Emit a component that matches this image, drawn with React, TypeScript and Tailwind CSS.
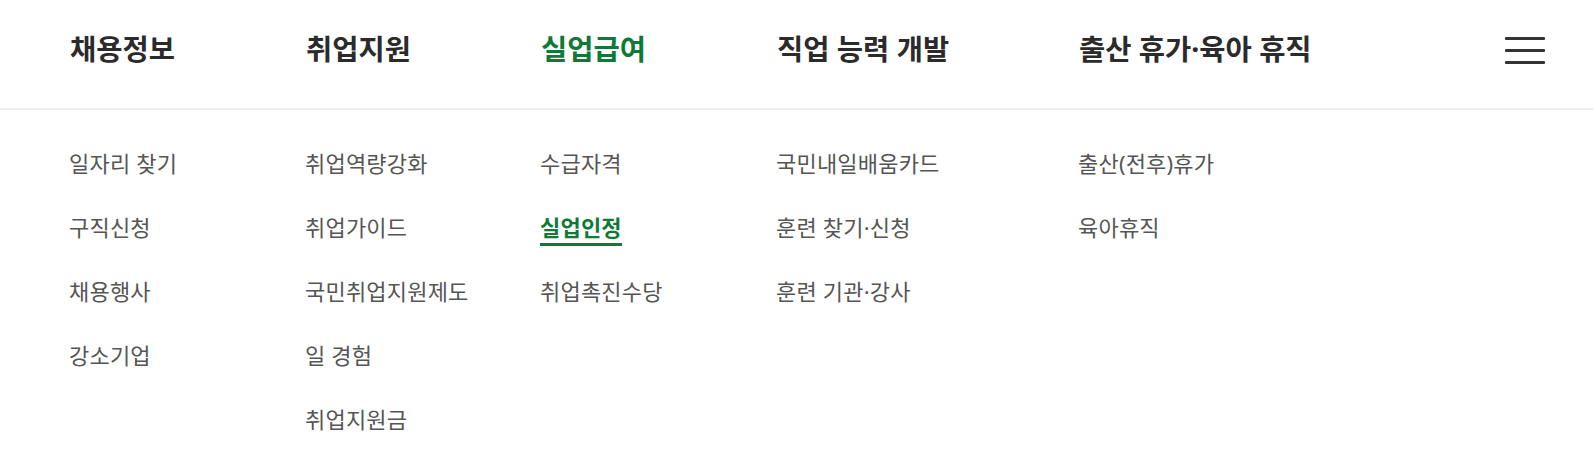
import React from "react";

type Col = { title: string; width: string; active?: boolean; items: { label: string; active?: boolean }[] };

const cols: Col[] = [
  { title: "채용정보", width: "w-[236px]", items: [{ label: "일자리 찾기" }, { label: "구직신청" }, { label: "채용행사" }, { label: "강소기업" }] },
  { title: "취업지원", width: "w-[235px]", items: [{ label: "취업역량강화" }, { label: "취업가이드" }, { label: "국민취업지원제도" }, { label: "일 경험" }, { label: "취업지원금" }] },
  { title: "실업급여", width: "w-[236px]", active: true, items: [{ label: "수급자격" }, { label: "실업인정", active: true }, { label: "취업촉진수당" }] },
  { title: "직업 능력 개발", width: "w-[302px]", items: [{ label: "국민내일배움카드" }, { label: "훈련 찾기·신청" }, { label: "훈련 기관·강사" }] },
  { title: "출산 휴가·육아 휴직", width: "w-[300px]", items: [{ label: "출산(전후)휴가" }, { label: "육아휴직" }] },
];

export default function App() {
  return (
    <div
      className="w-[1593px] h-[469px] bg-white overflow-hidden"
      style={{ fontFamily: '"Noto Sans", "Noto Sans CJK KR", sans-serif' }}
    >
      <div className="h-[110px] border-b-2 border-[#eeeeee] flex items-center pb-[11px] pl-[70px] pr-[48px]">
        <nav className="flex flex-1">
          {cols.map((c) => (
            <div
              key={c.title}
              className={`${c.width} shrink-0 text-[28.5px] font-bold tracking-[0px] leading-[34px] whitespace-nowrap ${
                c.active ? "text-[#0f7a37]" : "text-[#2b2b2b]"
              }`}
            >
              {c.title}
            </div>
          ))}
        </nav>
        <button className="w-[40px] h-[27px] mt-[3px] flex flex-col justify-between" aria-label="menu">
          <span className="block h-[3px] w-full bg-[#333333] rounded-[1px]" />
          <span className="block h-[3px] w-full bg-[#333333] rounded-[1px]" />
          <span className="block h-[3px] w-full bg-[#333333] rounded-[1px]" />
        </button>
      </div>
      <div className="flex pl-[69px] pt-[21px]">
        {cols.map((c) => (
          <ul key={c.title} className={`${c.width} shrink-0`}>
            {c.items.map((it) => (
              <li key={it.label} className="h-[64px] flex items-center">
                <span
                  className={`relative whitespace-nowrap text-[22px] leading-[28px] tracking-[0.2px] ${
                    it.active ? "text-[#0f7a37] font-bold" : "text-[#555555]"
                  }`}
                >
                  {it.label}
                  {it.active && <span className="absolute left-0 right-0 -bottom-[5px] h-[3px] bg-[#0f7a37]" />}
                </span>
              </li>
            ))}
          </ul>
        ))}
      </div>
    </div>
  );
}
